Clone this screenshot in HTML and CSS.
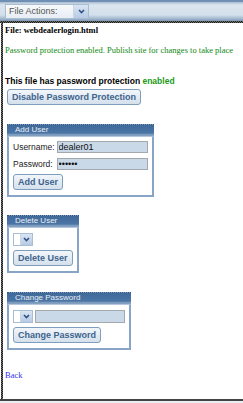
FILE: index.html
```html
<!DOCTYPE html>
<html lang="en">
<head>
  <meta charset="UTF-8">
  <title>Password Protection</title>
  <link rel="stylesheet" href="styles.css">
</head>
<body>
  <div class="toolbar">
    <div class="dropdown file-actions">
      <span class="label">File Actions:</span>
      <span class="arrow"><svg width="7" height="5" viewBox="0 0 7 5"><path d="M1 1 L3.5 3.5 L6 1" fill="none" stroke="#2d5283" stroke-width="1.6"/></svg></span>
    </div>
  </div>

  <div class="page">
    <p class="file-name">File: webdealerlogin.html</p>
    <p class="notice">Password protection enabled. Publish site for changes to take place</p>

    <p class="status">This file has password protection <span class="on">enabled</span></p>
    <button class="btn">Disable Password Protection</button>

    <div class="panel">
      <div class="panel-head">Add User</div>
      <div class="panel-body">
        <div class="form-grid">
          <label>Username:</label>
          <input type="text" class="field" value="dealer01">
          <label>Password:</label>
          <input type="password" class="field" value="secret">
        </div>
        <button class="btn">Add User</button>
      </div>
    </div>

    <div class="panel delete">
      <div class="panel-head">Delete User</div>
      <div class="panel-body">
        <div class="row">
          <div class="dropdown small">
            <span class="label"></span>
            <span class="arrow"><svg width="7" height="5" viewBox="0 0 7 5"><path d="M1 1 L3.5 3.5 L6 1" fill="none" stroke="#2d5283" stroke-width="1.6"/></svg></span>
          </div>
        </div>
        <button class="btn">Delete User</button>
      </div>
    </div>

    <div class="panel">
      <div class="panel-head">Change Password</div>
      <div class="panel-body">
        <div class="row">
          <div class="dropdown small">
            <span class="label"></span>
            <span class="arrow"><svg width="7" height="5" viewBox="0 0 7 5"><path d="M1 1 L3.5 3.5 L6 1" fill="none" stroke="#2d5283" stroke-width="1.6"/></svg></span>
          </div>
          <input type="password" class="field">
        </div>
        <button class="btn">Change Password</button>
      </div>
    </div>

    <a href="#" class="back">Back</a>
  </div>
  <div class="footer"></div>
</body>
</html>
```

FILE: styles.css
```css
* {
  margin: 0;
  padding: 0;
  box-sizing: border-box;
}

body {
  font-family: 'Liberation Sans', Arial, sans-serif;
  background-color: #fff;
  width: 243px;
  height: 403px;
  overflow: hidden;
}

/* checker strip used for the dotted frame lines */
.toolbar {
  height: 23px;
  padding: 4px 0 0 5px;
  background:
    repeating-conic-gradient(#1e1e1e 0 25%, #6a6a6a 0 50%) 0 100% / 2px 2px repeat-x,
    linear-gradient(#6f8fb4 0, #6f8fb4 2px, #a9bccf 2px, #dbe5ef 5px, #d3dfeb 15px, #9fb4ca 19px, #7d97b3 21px);
}

.dropdown {
  display: flex;
  align-items: stretch;
  border: 1px solid #a9bdd3;
  background-color: #fff;
}

.dropdown .arrow {
  display: flex;
  align-items: center;
  justify-content: center;
  background: linear-gradient(#d9e5f3, #b6cbe4);
  border-left: 1px solid #c8d6e6;
}

.file-actions {
  width: 84px;
  height: 15px;
  background: linear-gradient(#f8fafc, #e7edf4);
}

.file-actions .label {
  flex: 1;
  font-size: 9px;
  line-height: 13px;
  color: #555;
  padding-left: 3px;
}

.file-actions .arrow {
  width: 15px;
}

.small {
  width: 20px;
  height: 13px;
}

.small .label {
  flex: 1;
}

.small .arrow {
  width: 12px;
}

.page {
  height: 378px;
  padding-left: 5px;
  background: repeating-conic-gradient(#1e1e1e 0 25%, #6a6a6a 0 50%) 1px 0 / 2px 2px repeat-y;
  border-bottom: 2px solid #444;
}

.file-name {
  font-family: 'Liberation Serif', 'Times New Roman', serif;
  font-weight: bold;
  font-size: 8.5px;
  line-height: 12px;
  padding-top: 1px;
}

.notice {
  font-family: 'Liberation Serif', 'Times New Roman', serif;
  font-size: 8.5px;
  color: #118811;
  margin-top: 9px;
}

.status {
  font-weight: bold;
  font-size: 8.5px;
  margin-top: 21px;
}

.on {
  color: #1a9a1a;
}

.btn {
  display: block;
  font-family: 'Liberation Sans', Arial, sans-serif;
  font-weight: bold;
  font-size: 9px;
  color: #40638e;
  padding: 0 4px;
  height: 16px;
  border: 1px solid #7f9dbd;
  border-radius: 3px;
  background: linear-gradient(#f2f6fa, #d4e0ec);
  margin-top: 3px;
  margin-left: 2px;
}

.panel {
  display: table;
  margin: 19px 0 0 2px;
}

.panel.delete {
  margin-top: 18px;
}

.panel-head {
  font-size: 8px;
  line-height: 10px;
  height: 12px;
  color: #e8eef6;
  padding-left: 8px;
  background: linear-gradient(#3f6998 0, #4b75a4 8px, #8aa6c6 10px, #6d8db3 12px);
  border-top: 1px dotted #2f5584;
}

.panel-body {
  border: 2px solid #88a5c7;
  border-top: 1px solid #b3c6dc;
  padding: 4px 4px 5px 4px;
}

.form-grid {
  display: grid;
  grid-template-columns: auto 91px;
  column-gap: 2px;
  row-gap: 5px;
  align-items: center;
  font-size: 8.5px;
}

.form-grid label {
  color: #222;
}

.field {
  height: 12px;
  width: 91px;
  background-color: #c9d9e8;
  border: 1px solid #a4a9ae;
  font-family: 'Liberation Sans', Arial, sans-serif;
  font-size: 9px;
  padding-left: 1px;
  color: #111;
}

.row {
  display: flex;
  gap: 2px;
  align-items: center;
  margin-top: 1px;
}

.row .field {
  width: 90px;
  height: 13px;
}

.panel .btn {
  margin-left: 0;
  margin-top: 4px;
}

.back {
  display: block;
  font-family: 'Liberation Serif', 'Times New Roman', serif;
  font-size: 8.5px;
  color: #3333ee;
  text-decoration: none;
  margin-top: 20px;
}

.footer {
  height: 2px;
  background-color: #e9eef3;
}
```
